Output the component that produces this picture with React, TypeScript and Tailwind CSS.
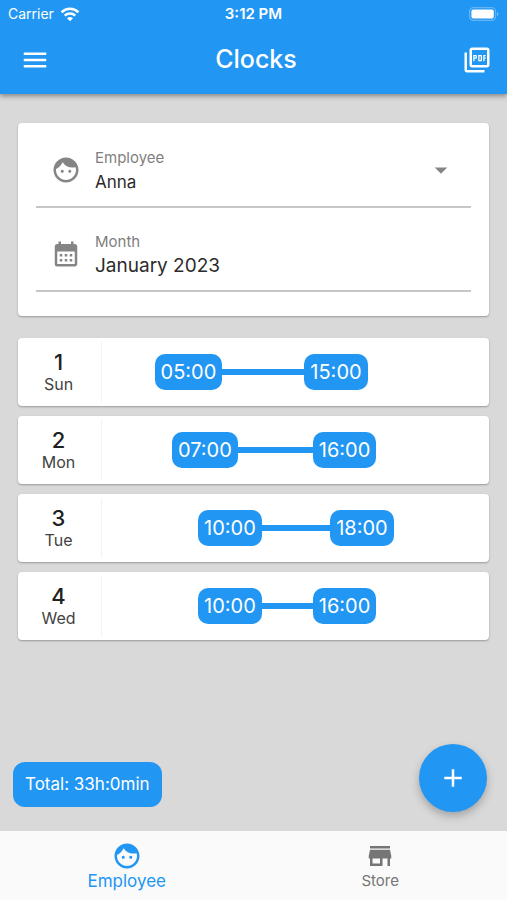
import { useState } from "react";
import {
  MdAdd,
  MdArrowDropDown,
  MdCalendarMonth,
  MdFace,
  MdMenu,
  MdOutlinePictureAsPdf,
  MdStore,
} from "react-icons/md";

interface Shift {
  day: number;
  weekday: string;
  start: number;
  end: number;
}

const shifts: Shift[] = [
  { day: 1, weekday: "Sun", start: 5, end: 15 },
  { day: 2, weekday: "Mon", start: 7, end: 16 },
  { day: 3, weekday: "Tue", start: 10, end: 18 },
  { day: 4, weekday: "Wed", start: 10, end: 16 },
];

// share of the track that one hour takes, the rest is room for the two chips
const HOUR_PERCENT = 2.6;

const formatHour = (hour: number) => `${String(hour).padStart(2, "0")}:00`;

function StatusBar() {
  return (
    <div className="grid h-7 grid-cols-3 items-center px-2 text-sm text-white">
      <div className="flex items-center gap-1.5">
        <span>Carrier</span>
        <svg width="20" height="15" viewBox="0 0 20 15" fill="none" aria-hidden="true">
          <path d="M1.6 5.2C6.3 .6 13.7 .6 18.4 5.2" stroke="currentColor" strokeWidth="2.6" />
          <path d="M4.700 8.600c3-2.800 7.600-2.800 10.600 0" stroke="currentColor" strokeWidth="2.400" />
          <path d="M10 14.200 7 11.200c1.700-1.600 4.300-1.600 6 0z" fill="currentColor" />
        </svg>
      </div>
      <span className="text-center text-[15px] font-semibold">3:12 PM</span>
      <svg className="justify-self-end" width="30" height="14" viewBox="0 0 30 14" aria-hidden="true">
        <rect x="0.600" y="0.600" width="26" height="12.800" rx="4" fill="none" stroke="#fff" strokeOpacity="0.300" strokeWidth="1.200" />
        <rect x="2.400" y="2.400" width="22.400" height="9.200" rx="2" fill="#fff" />
        <path d="M28 5v4c1.800-.6 1.800-3.400 0-4z" fill="#fff" fillOpacity="0.400" />
      </svg>
    </div>
  );
}

function TimeChip({ hour }: { hour: number }) {
  return (
    <button
      type="button"
      className="flex h-9 shrink-0 items-center rounded-[10px] bg-[#2196f3] px-1.5 text-xl text-white"
    >
      {formatHour(hour)}
    </button>
  );
}

function ShiftRow({ shift }: { shift: Shift }) {
  return (
    <li className="flex h-[68px] rounded bg-white py-1 shadow-[0_1px_2px_rgba(0,0,0,0.3)]">
      <div className="flex w-21 flex-col items-center justify-center border-r border-[#f3f3f3] pr-0.5">
        <span className="text-[22px] leading-6 font-medium text-[#212121]">{shift.day}</span>
        <span className="text-base leading-5 text-[#424242]">{shift.weekday}</span>
      </div>
      <div className="flex flex-1 items-center pr-[43px] pl-[9px]">
        <div
          className="flex flex-1 items-center"
          style={{
            paddingLeft: `${shift.start * HOUR_PERCENT}%`,
            paddingRight: `${(24 - shift.end) * HOUR_PERCENT}%`,
          }}
        >
          <TimeChip hour={shift.start} />
          <div className="h-1.5 flex-1 bg-[#2196f3]" />
          <TimeChip hour={shift.end} />
        </div>
      </div>
    </li>
  );
}

export default function App() {
  const [employee, setEmployee] = useState("Anna");
  const [tab, setTab] = useState("employee");

  const totalHours = shifts.reduce((sum, s) => sum + s.end - s.start, 0);

  return (
    <div className="flex min-h-screen flex-col bg-[#d9d9d9] font-['Inter','Liberation_Sans',sans-serif]">
      <header className="sticky top-0 z-10 bg-[#2196f3] text-white shadow-[0_2px_5px_rgba(0,0,0,0.4)]">
        <StatusBar />
        <div className="flex h-[66px] items-center justify-between pr-[15px] pb-0.5 pl-5">
          <button type="button" aria-label="Menu">
            <MdMenu size={30} />
          </button>
          <h1 className="text-[25px] font-medium">Clocks</h1>
          <button type="button" aria-label="Export PDF">
            <MdOutlinePictureAsPdf size={30} />
          </button>
        </div>
      </header>

      <main className="flex flex-1 flex-col px-[18px] pt-[29px]">
        <section className="rounded bg-white px-[18px] pt-px pb-6 shadow-[0_1px_2px_rgba(0,0,0,0.3)]">
          <div className="flex h-[84px] items-center gap-3.5 border-b-2 border-[#c6c6c6] px-[15px] pt-2.5">
            <MdFace size={30} className="shrink-0 text-[#858585]" />
            <div className="flex flex-1 flex-col">
              <label htmlFor="employee" className="text-[15px] leading-6 text-[#808080]">
                Employee
              </label>
              <select
                id="employee"
                value={employee}
                onChange={(e) => setEmployee(e.target.value)}
                className="h-6 w-full appearance-none bg-transparent text-[17px] text-[#2b2b2b] outline-none"
              >
                <option>Anna</option>
              </select>
            </div>
            <MdArrowDropDown size={30} className="pointer-events-none shrink-0 text-[#858585]" />
          </div>
          <div className="flex h-[84px] items-center gap-3.5 border-b-2 border-[#c6c6c6] px-[15px] pt-2.5">
            <MdCalendarMonth size={30} className="shrink-0 text-[#858585]" />
            <div className="flex flex-1 flex-col">
              <label htmlFor="month" className="text-[15px] leading-6 text-[#808080]">
                Month
              </label>
              <input
                id="month"
                type="text"
                readOnly
                value="January 2023"
                className="h-6 w-full bg-transparent text-[19px] text-[#2b2b2b] outline-none"
              />
            </div>
          </div>
        </section>

        <ul className="mt-[22px] flex flex-col gap-2.5">
          {shifts.map((shift) => (
            <ShiftRow key={shift.day} shift={shift} />
          ))}
        </ul>
      </main>

      <div className="sticky bottom-0">
        <div className="flex items-end justify-between pr-5 pb-[19px] pl-[13px]">
          <div className="mb-[5px] flex h-[45px] items-center rounded-xl bg-[#2196f3] px-3 text-[17px] text-white">
            Total: {totalHours}h:0min
          </div>
          <button
            type="button"
            aria-label="Add"
            className="flex size-[68px] items-center justify-center rounded-full bg-[#2196f3] text-white shadow-[0_4px_8px_rgba(0,0,0,0.25)]"
          >
            <MdAdd size={30} />
          </button>
        </div>
        <nav className="grid h-[69px] grid-cols-2 bg-[#fafafa]">
          <button
            type="button"
            onClick={() => setTab("employee")}
            className={`flex flex-col items-center pt-2.5 ${tab === "employee" ? "text-[17px] leading-5 text-[#2196f3]" : "text-[15px] leading-5 text-[#757575]"}`}
          >
            <MdFace size={30} />
            Employee
          </button>
          <button
            type="button"
            onClick={() => setTab("store")}
            className={`flex flex-col items-center pt-2.5 ${tab === "store" ? "text-[17px] leading-5 text-[#2196f3]" : "text-[15px] leading-5 text-[#757575]"}`}
          >
            <MdStore size={30} />
            Store
          </button>
        </nav>
      </div>
    </div>
  );
}
